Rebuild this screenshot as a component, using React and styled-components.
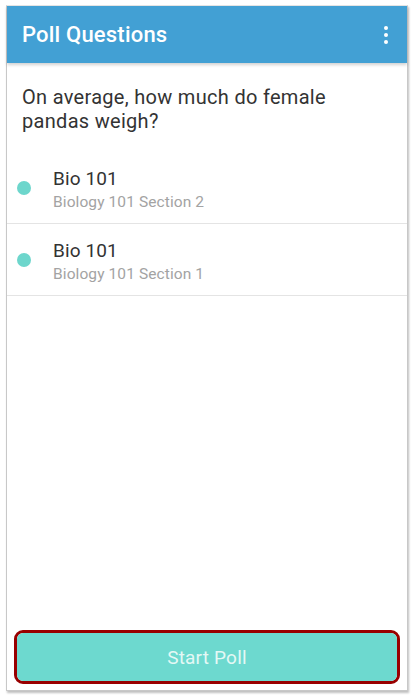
import React from "react";
import styled, { createGlobalStyle } from "styled-components";

const Global = createGlobalStyle`
  html, body { margin: 0; padding: 0; background: #ffffff; }
  body { font-family: Roboto, "Noto Sans", Arial, sans-serif; }
  * { box-sizing: border-box; }
`;

const Page = styled.div`
  width: 414px;
  height: 696px;
  padding: 5px 6px 5px 6px;
`;

const Frame = styled.div`
  width: 402px;
  height: 686px;
  border: 1px solid #c8c8c8;
  border-top-color: #e6e6e6;
  box-shadow: 1px 2px 2px rgba(0, 0, 0, 0.25);
  background: #ffffff;
  display: flex;
  flex-direction: column;
`;

const Header = styled.header`
  height: 57px;
  flex: none;
  background: #42a0d4;
  display: flex;
  align-items: center;
  justify-content: space-between;
  padding: 0 19px 0 15px;
  box-shadow: 0 2px 3px rgba(0, 0, 0, 0.18);
  position: relative;
  z-index: 1;
`;

const Title = styled.h1`
  margin: 0;
  color: #ffffff;
  font-size: 22px;
  font-weight: 500;
  letter-spacing: 0.2px;
`;

const MenuButton = styled.div`
  display: flex;
  flex-direction: column;
  gap: 3px;
  padding: 4px 0;
`;

const Dot = styled.span`
  width: 4px;
  height: 4px;
  border-radius: 50%;
  background: #ffffff;
`;

const Question = styled.p`
  margin: 0;
  padding: 22px 15px 19px 15px;
  color: #333333;
  font-size: 20px;
  line-height: 24px;
  letter-spacing: 0.3px;
`;

const List = styled.ul`
  list-style: none;
  margin: 0;
  padding: 0;
`;

const Row = styled.li`
  display: flex;
  align-items: center;
  height: 72px;
  border-bottom: 1px solid #e4e4e4;
  padding: 0 0 0 10px;
`;

const Bullet = styled.span`
  width: 14px;
  height: 14px;
  border-radius: 50%;
  background: ${(p) => p.$color};
  margin-right: 22px;
  margin-top: 1px;
  flex: none;
`;

const RowText = styled.div`
  display: flex;
  flex-direction: column;
  gap: 2px;
  padding-top: 5px;
`;

const RowTitle = styled.span`
  color: #333333;
  font-size: 19px;
  line-height: 22px;
  letter-spacing: 0.1px;
`;

const RowSub = styled.span`
  color: #a3a3a3;
  font-size: 15.5px;
  line-height: 20px;
  letter-spacing: 0.1px;
`;

const Spacer = styled.div`
  flex: 1;
`;

const Footer = styled.div`
  padding: 0 7px 6px 7px;
`;

const Highlight = styled.div`
  border: 3px solid #990000;
  border-radius: 9px;
  overflow: hidden;
`;

const StartButton = styled.button`
  display: block;
  width: 100%;
  height: 48px;
  border: none;
  border-radius: 5px;
  background: #6dd9cf;
  color: #e4f8f5;
  font-family: Roboto, "Noto Sans", Arial, sans-serif;
  font-size: 19px;
  letter-spacing: 0.2px;
  cursor: pointer;
`;

const sections = [
  { title: "Bio 101", sub: "Biology 101 Section 2" },
  { title: "Bio 101", sub: "Biology 101 Section 1" },
];

export default function App() {
  return (
    <Page>
      <Global />
      <Frame>
        <Header>
          <Title>Poll Questions</Title>
          <MenuButton>
            <Dot />
            <Dot />
            <Dot />
          </MenuButton>
        </Header>
        <Question>On average, how much do female pandas weigh?</Question>
        <List>
          {sections.map((s, i) => (
            <Row key={i}>
              <Bullet $color="#6dd6cc" />
              <RowText>
                <RowTitle>{s.title}</RowTitle>
                <RowSub>{s.sub}</RowSub>
              </RowText>
            </Row>
          ))}
        </List>
        <Spacer />
        <Footer>
          <Highlight>
            <StartButton>Start Poll</StartButton>
          </Highlight>
        </Footer>
      </Frame>
    </Page>
  );
}
